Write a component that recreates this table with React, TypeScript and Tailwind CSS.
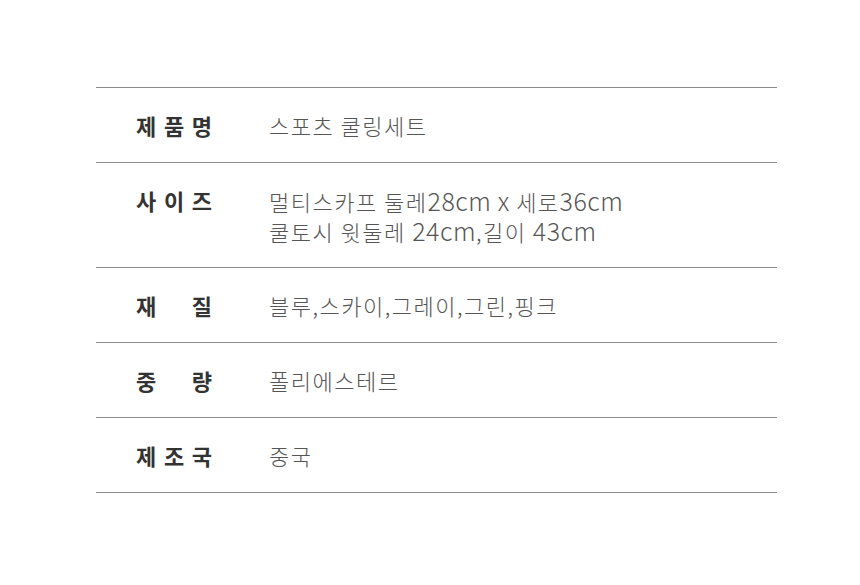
const rows: { label: string[]; value: string[] }[] = [
  { label: ["제", "품", "명"], value: ["스포츠 쿨링세트"] },
  { label: ["사", "이", "즈"], value: ["멀티스카프 둘레28cm x 세로36cm", "쿨토시 윗둘레 24cm,길이 43cm"] },
  { label: ["재", "질"], value: ["블루,스카이,그레이,그린,핑크"] },
  { label: ["중", "량"], value: ["폴리에스테르"] },
  { label: ["제", "조", "국"], value: ["중국"] },
];

// latin runs sit a bit larger than the hangul in the original
function Line({ text }: { text: string }) {
  const parts = text.split(/([A-Za-z0-9]+)/);
  return (
    <p className="h-[30px] whitespace-nowrap">
      {parts.map((p, i) =>
        /^[A-Za-z0-9]+$/.test(p) ? (
          <span key={i} className="inline-block h-[30px] leading-[30px] text-[25px] tracking-[0.5px]">
            {p}
          </span>
        ) : (
          <span key={i}>{p}</span>
        )
      )}
    </p>
  );
}

export default function App() {
  return (
    <div className="w-[860px] h-[585px] bg-white font-['Noto_Sans_CJK_KR',sans-serif]">
      <div className="pt-[87px] pl-[96px]">
        <div className="w-[681px] border-t border-[#8c8c8c]">
          {rows.map((row, i) => (
            <div key={i} className="flex py-[22px] border-b border-[#8c8c8c]">
              <div className="w-[76px] ml-[40px] h-[30px] flex justify-between items-center text-[22px] font-bold text-[#333] leading-[30px]">
                {row.label.map((c, j) => (
                  <span key={j}>{c}</span>
                ))}
              </div>
              <div className="ml-[57px] text-[22px] font-light tracking-[1.5px] text-[#555] leading-[30px]">
                {row.value.map((v, j) => (
                  <Line key={j} text={v} />
                ))}
              </div>
            </div>
          ))}
        </div>
      </div>
    </div>
  );
}
